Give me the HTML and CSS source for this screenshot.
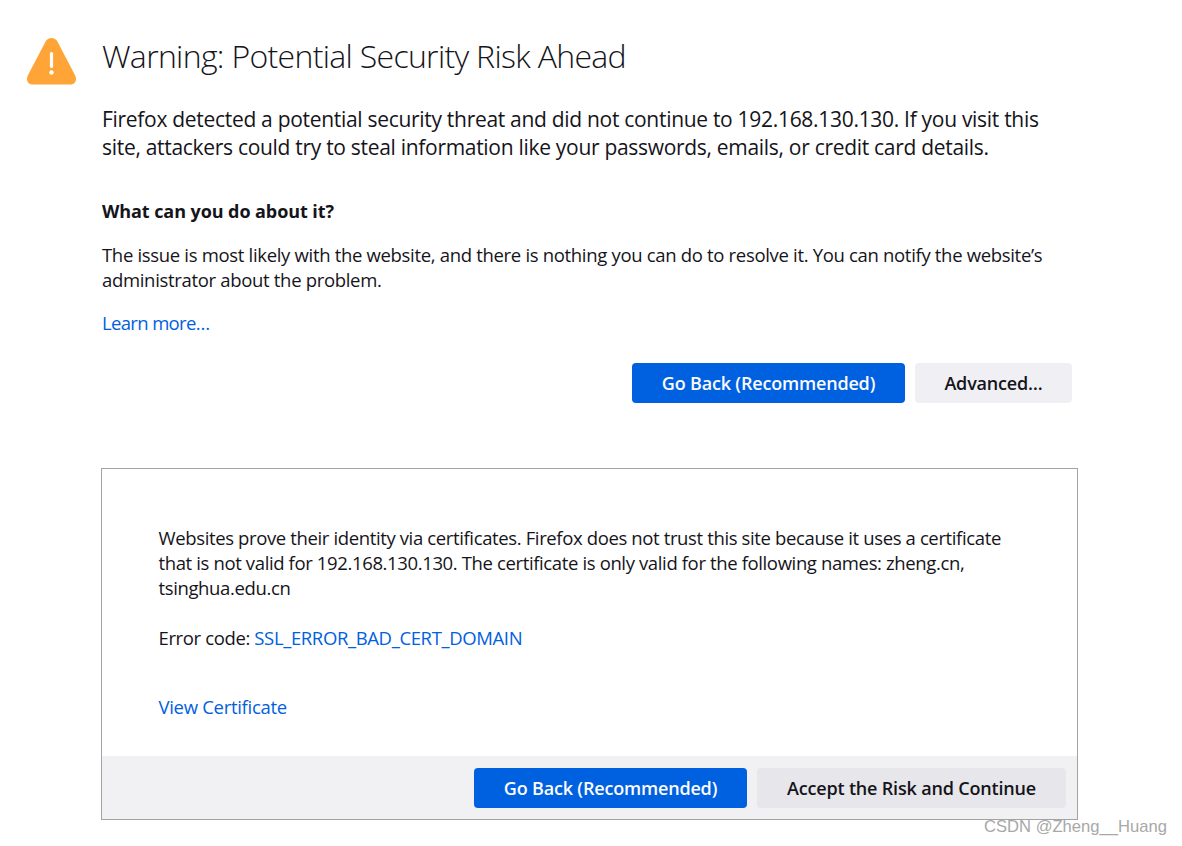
FILE: index.html
```html
<!DOCTYPE html>
<html lang="en">
<head>
<meta charset="utf-8">
<title>Warning: Potential Security Risk Ahead</title>
<link rel="stylesheet" href="styles.css">
</head>
<body>
<main class="page">
  <svg class="warn-icon" viewBox="0 0 49 48" aria-hidden="true">
    <path class="warn-tri" d="M24.5 1C27 1 29.200 2.300 30.400 4.500L47.800 37.700C48.600 39.200 49 40.500 49 42C49 45.300 46.500 47.500 43.500 47.500H5.500C2.500 47.500 0 45.300 0 42C0 40.500.4 39.200 1.200 37.700L18.600 4.500C19.800 2.300 22 1 24.500 1z"/>
    <rect class="warn-mark" x="22.900" y="15" width="3.200" height="16" rx="1.600"/>
    <circle class="warn-mark" cx="24.500" cy="35.500" r="2.200"/>
  </svg>
  <div class="main">
    <h1 class="title">Warning: Potential Security Risk Ahead</h1>
    <p class="lead">Firefox detected a potential security threat and did not continue to 192.168.130.130. If you visit this site, attackers could try to steal information like your passwords, emails, or credit card details.</p>
    <h2 class="subhead">What can you do about it?</h2>
    <p class="copy">The issue is most likely with the website, and there is nothing you can do to resolve it. You can notify the website’s administrator about the problem.</p>
    <a class="link learn" href="#">Learn more…</a>
    <div class="actions">
      <button class="btn primary go-back">Go Back (Recommended)</button>
      <button class="btn secondary advanced">Advanced…</button>
    </div>
    <section class="panel">
      <div class="panel-body">
        <p class="panel-text">Websites prove their identity via certificates. Firefox does not trust this site because it uses a certificate that is not valid for 192.168.130.130. The certificate is only valid for the following names: zheng.cn, tsinghua.edu.cn</p>
        <p class="panel-text code">Error code: <a class="link" href="#">SSL_ERROR_BAD_CERT_DOMAIN</a></p>
        <a class="link view" href="#">View Certificate</a>
      </div>
      <div class="panel-foot">
        <button class="btn primary go-back">Go Back (Recommended)</button>
        <button class="btn accept">Accept the Risk and Continue</button>
      </div>
    </section>
  </div>
</main>
<div class="watermark">CSDN @Zheng__Huang</div>
</body>
</html>
```
FILE: styles.css
```css
* { box-sizing: border-box; }
html, body { margin: 0; height: 846px; overflow: hidden; }
body {
  position: relative;
  background: #fff;
  color: #15141a;
  font-family: "Open Sans", "Noto Sans", sans-serif;
}
.page { display: flex; align-items: flex-start; padding: 36px 0 0 27px; }
.warn-icon { width: 49px; height: 48px; flex: none; margin-right: 25px; margin-top: 1px; }
.warn-tri { fill: #ffa436; }
.warn-mark { fill: #fff; }
.main { width: 977px; }
.title { margin: 0 0 0 1px; font-weight: 300; font-size: 32px; line-height: 40px; letter-spacing: -0.68px; }
.lead { margin: 29px 30px 0 1px; font-size: 21px; line-height: 28px; letter-spacing: -0.3px; }
.subhead { margin: 38px 0 0 1px; font-size: 18px; line-height: 24px; font-weight: 700; letter-spacing: -0.08px; }
.copy { margin: 19px 30px 0 1px; font-size: 18.500px; line-height: 25px; letter-spacing: -0.32px; }
.link { color: #0060df; text-decoration: none; }
.learn { display: block; margin: 18px 0 0 1px; font-size: 18.500px; line-height: 25px; letter-spacing: -0.65px; }
.actions { display: flex; justify-content: flex-end; gap: 10px; margin: 28px 6px 0 0; }
.btn { height: 40px; border: 0; border-radius: 4px; padding: 0; font-family: inherit; font-size: 18px; font-weight: 600; letter-spacing: -0.18px; }
.primary { background: #0061e0; color: #fbfbfe; }
.secondary { background: #f0f0f4; color: #15141a; }
.go-back { width: 273px; }
.advanced { width: 157px; }
.accept { width: 309px; background: #e6e6eb; color: #15141a; }
.panel { margin-top: 65px; height: 352px; border: 1px solid #a3a3a3; display: flex; flex-direction: column; justify-content: space-between; }
.panel-body { padding: 56px 50px 0 56.500px; }
.panel-text { margin: 0; font-size: 18.500px; line-height: 25px; letter-spacing: -0.37px; }
.code { margin-top: 25px; }
.view { display: block; margin-top: 44px; font-size: 18.500px; line-height: 25px; letter-spacing: -0.3px; }
.panel-foot { height: 63px; background: #f1f1f4; display: flex; justify-content: flex-end; gap: 10px; padding: 12px 11px 11px 0; }
.watermark { position: absolute; left: 984px; top: 817px; font-family: "Liberation Sans", sans-serif; font-size: 16.600px; line-height: 20px; color: #a8a8a8; white-space: nowrap; }
```
